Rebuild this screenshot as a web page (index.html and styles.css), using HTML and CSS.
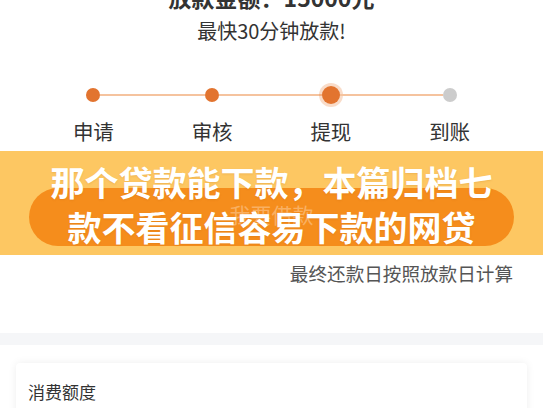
FILE: index.html
```html
<!DOCTYPE html>
<html lang="zh-CN">
<head>
<meta charset="utf-8">
<title>放款进度</title>
<link rel="stylesheet" href="styles.css">
</head>
<body>
<div class="page">
  <section class="hero">
    <div class="amount">放款金额：15000元</div>
    <div class="fast">最快30分钟放款!</div>
  </section>

  <section class="steps">
    <div class="step">
      <div class="track"><span class="seg hidden"></span><span class="dot"></span><span class="seg"></span></div>
      <div class="label">申请</div>
    </div>
    <div class="step">
      <div class="track"><span class="seg"></span><span class="dot"></span><span class="seg"></span></div>
      <div class="label">审核</div>
    </div>
    <div class="step">
      <div class="track"><span class="seg"></span><span class="dot active"></span><span class="seg"></span></div>
      <div class="label">提现</div>
    </div>
    <div class="step">
      <div class="track"><span class="seg"></span><span class="dot todo"></span><span class="seg hidden"></span></div>
      <div class="label">到账</div>
    </div>
  </section>

  <section class="banner">
    <div class="pill">我要借款</div>
    <h1 class="overlay"><span class="line">那个贷款能下款，本篇归档七</span><span class="line">款不看征信容易下款的网贷</span></h1>
  </section>

  <p class="note">最终还款日按照放款日计算</p>

  <div class="divider"></div>

  <section class="card">
    <div class="card-title">消费额度</div>
  </section>
</div>
</body>
</html>
```

FILE: styles.css
```css
html, body {
  margin: 0;
  padding: 0;
  background: #ffffff;
}

body {
  font-family: "Noto Sans CJK SC", "Noto Sans", sans-serif;
  color: #333333;
  overflow: hidden;
}

.page {
  width: 543px;
}

.hero {
  text-align: center;
}

.amount {
  font-size: 23px;
  line-height: 23px;
  font-weight: 700;
  margin-top: -14px;
  color: #333333;
}

.fast {
  font-size: 20px;
  line-height: 20px;
  margin-top: 12px;
  color: #333333;
}

.steps {
  display: grid;
  grid-template-columns: repeat(4, 1fr);
  padding: 0 34px;
  margin-top: 43px;
}

.step {
  display: flex;
  flex-direction: column;
  align-items: stretch;
}

.track {
  height: 22px;
  display: flex;
  align-items: center;
}

.seg {
  flex: 1;
  height: 2px;
  background: #f5c39e;
}

.seg.hidden {
  background: transparent;
}

.dot {
  width: 14px;
  height: 14px;
  border-radius: 50%;
  background: #e2742f;
  flex: none;
}

.dot.active {
  width: 18px;
  height: 18px;
  box-shadow: 0 0 0 3px rgba(235, 130, 60, 0.28);
}

.dot.todo {
  background: #cccccc;
}

.label {
  margin-top: 15px;
  font-size: 20.5px;
  line-height: 20px;
  text-align: center;
  color: #333333;
}

.banner {
  position: relative;
  margin-top: 10px;
  height: 104px;
  box-sizing: border-box;
  padding: 37px 29px 9px;
  background: #fdc762;
}

.pill {
  height: 58px;
  border-radius: 29px;
  background: #f58d1c;
  display: flex;
  align-items: center;
  justify-content: center;
  font-size: 21px;
  color: #f9b062;
  padding-bottom: 6px;
  box-sizing: border-box;
}

.overlay {
  position: absolute;
  top: 8px;
  left: 0;
  right: 0;
  margin: 0;
  text-align: center;
  font-size: 34px;
  line-height: 45px;
  font-weight: 700;
  color: #ffffff;
  text-shadow: 0 1px 2px rgba(160, 80, 0, 0.15);
}

.overlay .line {
  display: block;
}

.note {
  margin: 8px 0 0;
  padding-right: 30px;
  text-align: right;
  font-size: 18.6px;
  line-height: 19px;
  color: #555555;
}

.divider {
  margin-top: 51px;
  height: 12px;
  background: #f5f6f8;
}

.card {
  margin: 18px 16px 0;
  padding: 20px 12px 20px;
  background: #ffffff;
  border-radius: 4px;
  box-shadow: 0 0 8px rgba(0, 0, 0, 0.07);
}

.card-title {
  font-size: 17px;
  line-height: 18px;
  color: #333333;
}
```
